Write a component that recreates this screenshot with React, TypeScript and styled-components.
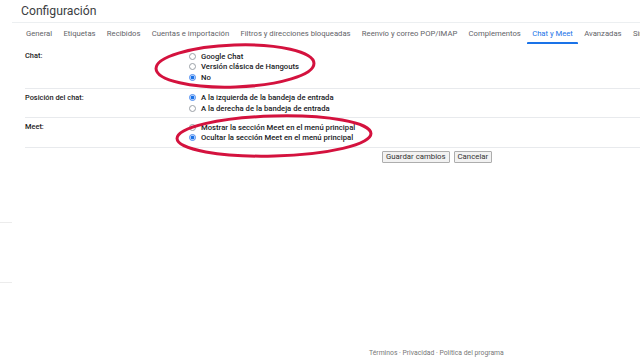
import React from "react";
import styled, { createGlobalStyle } from "styled-components";

const RED = "#d4123e";

type Option = { label: string; checked?: boolean };
type Setting = { label: string; options: Option[] };

const TABS = [
    "General",
    "Etiquetas",
    "Recibidos",
    "Cuentas e importación",
    "Filtros y direcciones bloqueadas",
    "Reenvío y correo POP/IMAP",
    "Complementos",
    "Chat y Meet",
    "Avanzadas",
    "Sin conexión",
];

const SETTINGS: Setting[] = [
    {
        label: "Chat:",
        options: [
            { label: "Google Chat" },
            { label: "Versión clásica de Hangouts" },
            { label: "No", checked: true },
        ],
    },
    {
        label: "Posición del chat:",
        options: [
            { label: "A la izquierda de la bandeja de entrada", checked: true },
            { label: "A la derecha de la bandeja de entrada" },
        ],
    },
    {
        label: "Meet:",
        options: [
            { label: "Mostrar la sección Meet en el menú principal" },
            { label: "Ocultar la sección Meet en el menú principal", checked: true },
        ],
    },
];

const GlobalStyle = createGlobalStyle`
    html, body {
        margin: 0;
        padding: 0;
        background: #fff;
        width: 640px;
        height: 360px;
        overflow: hidden;
        font-family: Roboto, "Liberation Sans", Arial, sans-serif;
    }
`;

export default function App() {
    return (
        <>
            <GlobalStyle />
            <Page>
                <Sidebar>
                    <SideDivider top={222} />
                    <SideDivider top={59} />
                </Sidebar>
                <Main>
                    <Title>Configuración</Title>
                    <Tabs>
                        {TABS.map((t) => (
                            <Tab key={t} active={t === "Chat y Meet"}>
                                {t}
                            </Tab>
                        ))}
                    </Tabs>
                    <Settings>
                        {SETTINGS.map((s, i) => (
                            <Row key={s.label} first={i === 0}>
                                <Label>{s.label}</Label>
                                <Options>
                                    {s.options.map((o) => (
                                        <OptionLine key={o.label}>
                                            <Radio checked={!!o.checked} />
                                            {o.label}
                                        </OptionLine>
                                    ))}
                                </Options>
                            </Row>
                        ))}
                    </Settings>
                    <Buttons>
                        <Button>Guardar cambios</Button>
                        <Button>Cancelar</Button>
                    </Buttons>
                    <Footer>
                        Términos · Privacidad · Política del programa
                    </Footer>
                </Main>
                {/* marcas rojas dibujadas a mano sobre la captura */}
                <Marks width="640" height="360" viewBox="0 0 640 360">
                    <ellipse cx="235" cy="66" rx="79" ry="21" transform="rotate(-2 235 66)" />
                    <ellipse cx="274" cy="136" rx="97" ry="20" transform="rotate(-1.5 274 136)" />
                </Marks>
            </Page>
        </>
    );
}

const Page = styled.div`
    position: relative;
    display: flex;
    width: 640px;
    height: 360px;
    overflow: hidden;
`;

const Sidebar = styled.div`
    width: 12px;
    flex-shrink: 0;
    display: flex;
    flex-direction: column;
`;

const SideDivider = styled.div<{ top: number }>`
    margin-top: ${(p) => p.top}px;
    height: 1px;
    background: #ececec;
`;

const Main = styled.div`
    flex: 1;
    display: flex;
    flex-direction: column;
    min-width: 0;
    overflow: hidden;
`;

const Title = styled.div`
    height: 23px;
    box-sizing: border-box;
    padding: 4px 0 0 9px;
    font-size: 12.2px;
    color: #3c4043;
    border-bottom: 1px solid #eceff1;
    white-space: nowrap;
`;

const Tabs = styled.div`
    display: flex;
    gap: 9.3px;
    padding-left: 13px;
    height: 21px;
    white-space: nowrap;
`;

const Tab = styled.div<{ active?: boolean }>`
    position: relative;
    font-size: 7.7px;
    line-height: 21px;
    color: ${(p) => (p.active ? "#1a73e8" : "#5f6368")};
    padding: 0 1px;
    flex-shrink: 0;

    /* la pestaña activa lleva una raya azul algo más ancha que el texto */
    &::after {
        content: "";
        display: ${(p) => (p.active ? "block" : "none")};
        position: absolute;
        left: -4px;
        right: -4px;
        bottom: 0;
        height: 2px;
        background: #1a73e8;
        border-radius: 1px 1px 0 0;
    }
`;

const Settings = styled.div`
    margin: 3px 0 0 13px;
    display: flex;
    flex-direction: column;
`;

const Row = styled.div<{ first?: boolean }>`
    display: flex;
    padding: 4px 0 ${(p) => (p.first ? "5px" : "3.5px")};
    border-bottom: 1px solid #e8eaed;
`;

const Label = styled.div`
    width: 164px;
    flex-shrink: 0;
    font-size: 7.4px;
    line-height: 10.5px;
    font-weight: 500;
    color: #222;
`;

const Options = styled.div`
    display: flex;
    flex-direction: column;
`;

const OptionLine = styled.div`
    display: flex;
    align-items: center;
    gap: 5px;
    height: 10.5px;
    font-size: 7.7px;
    font-weight: 500;
    color: #202124;
    white-space: nowrap;
`;

const Radio = styled.span<{ checked: boolean }>`
    width: 7px;
    height: 7px;
    flex-shrink: 0;
    box-sizing: border-box;
    border-radius: 50%;
    border: 1px solid ${(p) => (p.checked ? "#4a8af0" : "#9aa0a6")};
    background: ${(p) =>
        p.checked ? "radial-gradient(circle, #1a73e8 45%, #d6e4fb 60%)" : "#fff"};
`;

const Buttons = styled.div`
    display: flex;
    gap: 4px;
    padding: 3px 0 0 370px;
`;

const Button = styled.div`
    height: 12px;
    box-sizing: border-box;
    padding: 0 3px;
    font-size: 7.8px;
    line-height: 10px;
    color: #333;
    background: #f2f2f2;
    border: 1px solid #adadad;
    border-radius: 1px;
    white-space: nowrap;
`;

const Footer = styled.div`
    margin-top: auto;
    padding: 0 0 2px 357px;
    font-size: 6.8px;
    line-height: 10px;
    color: #777;
    white-space: nowrap;
`;

const Marks = styled.svg`
    position: absolute;
    left: 0;
    top: 0;
    pointer-events: none;
    fill: none;
    stroke: ${RED};
    stroke-width: 3px;
`;
